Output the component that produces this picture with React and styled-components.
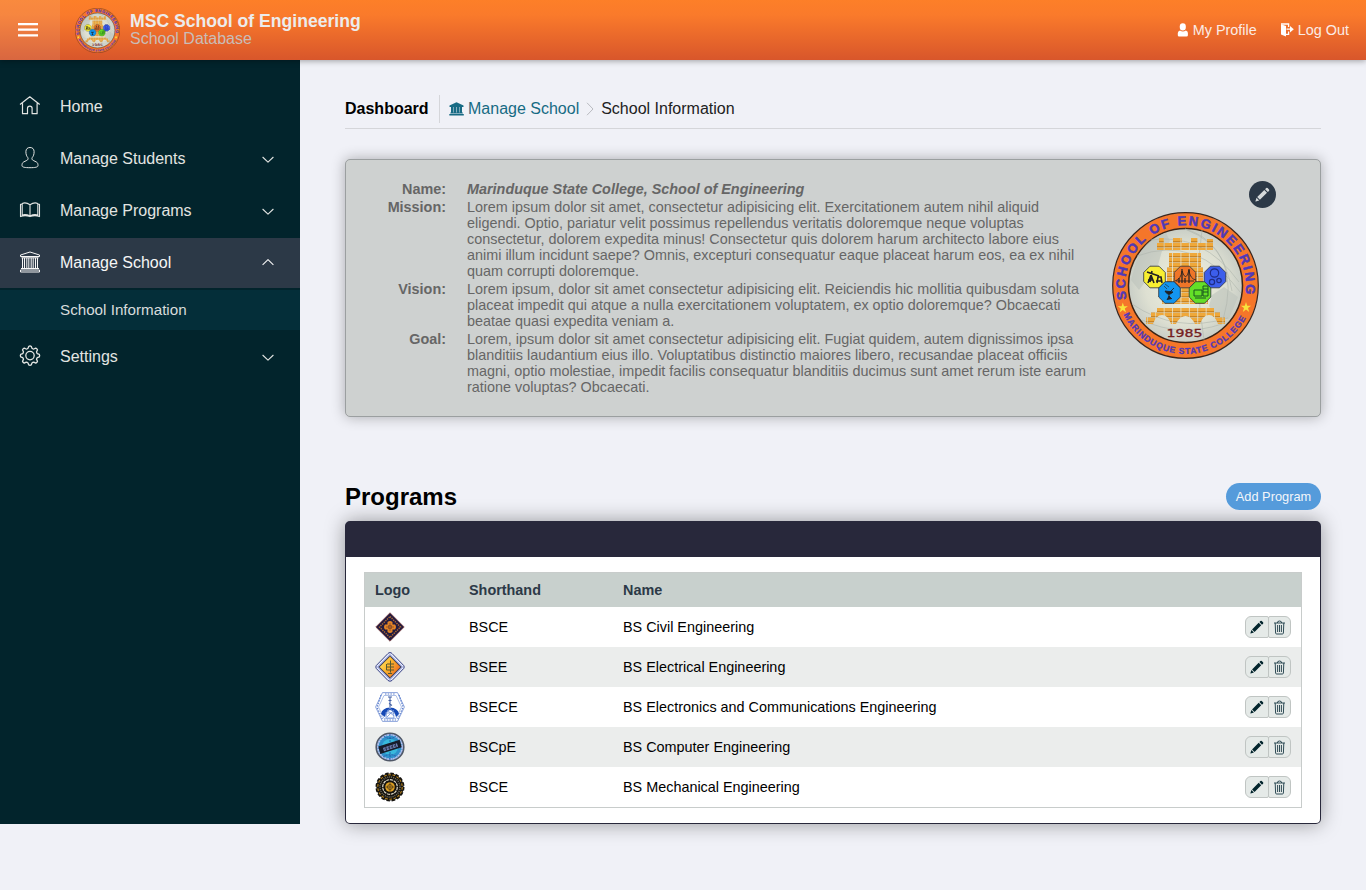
import React from "react";
import styled, { createGlobalStyle } from "styled-components";

const GlobalStyle = createGlobalStyle`
  * { box-sizing: border-box; }
  body { margin: 0; min-height: 890px; background: #f0f1f7; font: 14.4px/16px "Liberation Sans", Arial, sans-serif; color: #000; }
  button { font: inherit; margin: 0; padding: 0; }
  svg { display: block; flex: none; }
`;

const Header = styled.header`
  position: relative;
  z-index: 2;
  display: flex;
  align-items: center;
  height: 60px;
  background: linear-gradient(#fd7f28, #fa7a2b 25%, #d8562b);
  box-shadow: 0 1px 6px rgba(0, 0, 0, 0.35);
`;
const MenuButton = styled.button`
  display: flex;
  align-items: center;
  width: 60px;
  height: 60px;
  padding-left: 18px;
  border: 0;
  background: rgba(225, 225, 225, 0.12);
`;
const Brand = styled.div`
  display: flex;
  align-items: center;
  gap: 10px;
  margin-left: 15px;
  flex: 1;
`;
const BrandText = styled.div`
  padding-bottom: 2px;
`;
const BrandTitle = styled.div`
  font-size: 17.6px;
  line-height: 20px;
  font-weight: bold;
  color: #ececec;
`;
const BrandSub = styled.div`
  font-size: 16px;
  line-height: 16px;
  color: #c9bdb8;
`;
const HeaderLinks = styled.nav`
  display: flex;
  gap: 23px;
  padding-right: 17px;
`;
const HeaderLink = styled.a`
  display: flex;
  align-items: center;
  gap: 4px;
  color: #fbece6;
`;

const Body = styled.div`
  display: flex;
  align-items: flex-start;
`;
const Sidebar = styled.aside`
  display: flex;
  flex-direction: column;
  gap: 2px;
  width: 300px;
  height: 764px;
  padding-top: 22px;
  background: #02242c;
  flex: none;
`;
const NavItem = styled.a`
  display: flex;
  align-items: center;
  height: 50px;
  padding: 0 26px 2px 18px;
  font-size: 16px;
  color: ${(p) => (p.$active ? "#f6f6f6" : "#e2e4e2")};
  background: ${(p) => (p.$active ? "#2c3947" : "transparent")};
`;
const NavIcon = styled.span`
  width: 42px;
`;
const NavLabel = styled.span`
  flex: 1;
  padding-top: 2px;
`;
const SubItem = styled.a`
  display: flex;
  align-items: center;
  height: 40px;
  padding-left: 60px;
  font-size: 15.2px;
  color: #d8dcdc;
  background: #042e39;
`;

const Main = styled.main`
  flex: 1;
  padding: 35px 45px 0;
`;
const Breadcrumb = styled.div`
  display: flex;
  height: 34px;
  border-bottom: 1px solid #d5d6da;
  font-size: 16px;
  line-height: 27px;
  color: #222;
`;
const PageName = styled.div`
  height: 28px;
  width: 95px;
  border-right: 1px solid #d5d6da;
  font-weight: bold;
  color: #000;
`;
const Crumb = styled.a`
  display: flex;
  align-items: center;
  gap: 4px;
  height: 27px;
  margin-left: 9px;
  color: #176b84;
`;
const CrumbArrow = styled.span`
  display: flex;
  align-items: center;
  height: 28px;
  padding: 0 7px;
`;

const InfoCard = styled.section`
  display: flex;
  justify-content: space-between;
  height: 258px;
  margin-top: 30px;
  padding: 21px 44px 0 19px;
  border: 1px solid #9b9fa0;
  border-radius: 5px;
  background: #ced1d0;
  box-shadow: 0 0 14px rgba(0, 0, 0, 0.3);
  color: #666;
`;
const InfoList = styled.dl`
  display: grid;
  grid-template-columns: 81px 1fr;
  column-gap: 21px;
  row-gap: 2px;
  align-content: start;
  margin: 0;
`;
const Term = styled.dt`
  text-align: right;
  font-weight: bold;
`;
const Detail = styled.dd`
  margin: 0;
  white-space: nowrap;
  ${(p) => p.$title && "font-weight: bold; font-style: italic;"}
`;
const SealSide = styled.div`
  display: flex;
  flex-direction: column;
  width: 164px;
  gap: 4px;
`;
const EditButton = styled.button`
  display: grid;
  place-items: center;
  align-self: flex-end;
  width: 27px;
  height: 27px;
  border: 0;
  border-radius: 50%;
  background: #2c3947;
`;

const SectionHead = styled.div`
  display: flex;
  align-items: center;
  justify-content: space-between;
  height: 27px;
  margin-top: 66px;
`;
const SectionTitle = styled.h2`
  margin: 0;
  font-size: 24px;
  line-height: 27px;
`;
const AddButton = styled.button`
  width: 95px;
  height: 27px;
  border: 0;
  border-radius: 14px;
  background: #559bdb;
  color: #f3f6fa;
  font-size: 12.8px;
`;
const Panel = styled.section`
  height: 303px;
  margin-top: 11px;
  border: 1px solid #28283b;
  border-top-width: 36px;
  border-radius: 5px;
  padding: 15px 18px;
  background: #fff;
  box-shadow: 0 0 20px rgba(0, 0, 0, 0.38);
`;
const Table = styled.div`
  border: 1px solid #c8cccb;
`;
const Row = styled.div`
  display: grid;
  grid-template-columns: 94px 154px 1fr 46px;
  align-items: center;
  height: ${(p) => (p.$head ? 34 : 40)}px;
  padding: 0 10px;
  background: ${(p) => (p.$head ? "#c8d0cd" : p.$odd ? "#ebedec" : "#fff")};
  color: ${(p) => (p.$head ? "#2c3947" : "#000")};
  font-weight: ${(p) => (p.$head ? "bold" : "normal")};
`;
const Actions = styled.div`
  display: flex;
`;
const ActionButton = styled.button`
  display: grid;
  place-items: center;
  width: ${(p) => (p.$right ? 23 : 24)}px;
  height: 22px;
  margin-right: ${(p) => (p.$right ? 0 : -1)}px;
  border: 1px solid #c0c5c3;
  border-radius: ${(p) => (p.$right ? "2px 6px 6px 2px" : "6px 2px 2px 6px")};
  background: #e5eae8;
`;

/* ---- icons ---- */
const line = { fill: "none", stroke: "currentColor", strokeLinejoin: "round" };

const MenuIcon = () => (
  <svg width="20" height="14" viewBox="0 0 20 14" fill="#fff">
    <path d="M0 0h20v2.2H0zM0 5.6h20v2.2H0zM0 11.2h20v2.2H0z" />
  </svg>
);
const UserIcon = () => (
  <svg width="12" height="14" viewBox="0 0 12 14" fill="#fff">
    <rect x="2.8" y="0.3" width="6" height="7.2" rx="2.9" />
    <path d="M3 7.4Q.8 8 .8 10v2.2Q.8 13.4 2.1 13.4h7.400q1.400 0 1.400-1.200V10q0-2-2-2.600-3 2-5.900 0z" />
  </svg>
);
const LogoutIcon = () => (
  <svg width="14" height="14" viewBox="0 0 14 14">
    <path d="M1 1.2 6 3v10.4L1 11.6z" fill="#fff" />
    <path d="M1 1h7.6v3M6 11.4h2.6V8.5M6.5 6.2H11" fill="none" stroke="#fff" strokeWidth="1.3" />
    <path d="M10 3 13.8 6.2 10 9.4z" fill="#fff" />
  </svg>
);
const HomeIcon = () => (
  <svg width="24" height="24" viewBox="0 0 24 24" {...line} strokeWidth="1.2">
    <path d="M2 10.500 11.800 2.800 21.700 10.500M4.500 9.300v10.400h5v-5.500q0-2.100 2.300-2.100t2.300 2.100v5.500h5V9.300" />
  </svg>
);
const StudentIcon = () => (
  <svg width="24" height="24" viewBox="0 0 24 24" {...line} strokeWidth="1">
    <path d="M12 1.500c-2.500 0-4.100 1.500-4.100 4.100 0 3 .7 4.500 1.900 6 .6 1.200.2 2.200-1 2.800l-3.200 1.600C4.200 16.800 4 18 4 19.700c0 1.500 3 2 8 2s8-.5 8-2c0-1.700-.2-2.900-1.600-3.700l-3.200-1.600c-1.200-.6-1.600-1.600-1-2.800 1.200-1.500 1.900-3 1.900-6 0-2.600-1.600-4.100-4.100-4.100z" />
  </svg>
);
const BookIcon = () => (
  <svg width="24" height="24" viewBox="0 0 24 24" {...line} strokeWidth="1.1">
    <path d="M12 6.700Q8 4 4.200 5.400V17Q8 15.900 12 18q4-2.100 7.800-1V5.400Q16 4 12 6.700zV18M4.200 6.300H2.500v12.300Q7 16.700 12 18.600q5-1.900 9.500 0V6.300h-1.700" />
  </svg>
);
const SchoolIcon = () => (
  <svg width="24" height="24" viewBox="0 0 24 24" {...line} strokeWidth="1">
    <path d="M2.500 6.500V5L12 2l9.500 3v1.500zM3.500 7.800h17M4.500 8v10M6.500 8v10M8.800 8v10M10.800 8v10M13.200 8v10M15.200 8v10M17.500 8v10M19.500 8v10M3 18.500h18M2.500 20h19v2h-19z" />
  </svg>
);
const gearPath = Array.from({ length: 48 }, (_, i) => {
  const a = (i / 48) * Math.PI * 2;
  const r = 8.5 + 1.2 * Math.tanh(2 * Math.cos(8 * a));
  return `${i ? "L" : "M"}${(12 + r * Math.sin(a)).toFixed(2)} ${(11.6 - r * Math.cos(a)).toFixed(2)}`;
}).join("") + "Z";
const GearIcon = () => (
  <svg width="24" height="24" viewBox="0 0 24 24" {...line} strokeWidth="1.3">
    <path d={gearPath} />
    <circle cx="12" cy="11.6" r="4.2" />
  </svg>
);
const Chevron = ({ up }) => (
  <svg width="12" height="10" viewBox="0 0 12 10" {...line} strokeWidth="1.1">
    <path d={up ? "M.6 7.900 6 2.600l5.400 5.300" : "M.6 4 6 9.200 11.400 4"} />
  </svg>
);
const BankIcon = () => (
  <svg width="15" height="14" viewBox="0 0 15 14" fill="currentColor">
    <path d="M.5 3.500 7.500.2l7 3.300v1.400H.5zM2 5h2.200v5.800H2zM4.900 5h2.200v5.800H4.900zM7.900 5h2.200v5.800H7.900zM10.800 5H13v5.800h-2.200zM1.300 10.400h12.500v1.200H1.300zM.3 11.900h14.500v1.600H.3z" />
    <path d="M2 5h11v6H2z" opacity=".35" />
  </svg>
);
const ArrowIcon = () => (
  <svg width="8" height="14" viewBox="0 0 8 14" fill="none" stroke="#b9bbc0">
    <path d="M1 .8 7 7l-6 6.200" />
  </svg>
);
const PencilIcon = ({ color, size = 15 }) => (
  <svg width={size} height={size} viewBox="0 0 15 15" fill={color}>
    <path d="M9.300 3 12 5.700 4.900 12.800 2.200 10.100zM10.100 2.200l1.100-1.100q.7-.6 1.400 0L14 2.500q.6.700 0 1.400l-1.200 1.100zM1.500 10.800l2.700 2.700-3.500.9q-.4 0-.2-.5z" />
  </svg>
);
const TrashIcon = () => (
  <svg width="13" height="15" viewBox="0 0 13 15" fill="none" stroke="#2f4c56" strokeWidth="1">
    <path d="M1 3h11M4.300 3Q4.300 1 6.500 1t2.200 2M2.200 3l.4 10q.1 1 1 1h5.800q.9 0 1-1l.4-10M4.600 5v7M6.500 5v7M8.400 5v7" />
  </svg>
);

/* ---- school seal ---- */
const octagon = (cx, cy, r) =>
  Array.from({ length: 8 }, (_, i) => {
    const a = ((i + 0.5) * Math.PI) / 4;
    return `${(cx + r * Math.cos(a)).toFixed(1)},${(cy + r * Math.sin(a)).toFixed(1)}`;
  }).join(" ");
const star = (cx, cy) =>
  Array.from({ length: 10 }, (_, i) => {
    const r = i % 2 ? 2.1 : 5.4;
    const a = (i * Math.PI) / 5;
    return `${(cx + r * Math.sin(a)).toFixed(1)},${(cy - r * Math.cos(a)).toFixed(1)}`;
  }).join(" ");

const Seal = ({ size, id }) => (
  <svg width={size} height={size} viewBox="0 0 147 147">
    <defs>
      <path id={`${id}-top`} d="M14.600 87A60.400 60.400 0 1 1 132.400 87" />
      <path id={`${id}-bottom`} d="M11.500 102.500A68.400 68.400 0 0 0 135.500 102.500" />
      <pattern id={`${id}-brick`} width="8.4" height="5" patternUnits="userSpaceOnUse" x="2.2" y="1">
        <rect width="7.6" height="4.3" fill="#efa83a" />
        <path d="M0 3.800h7.600" stroke="#b97518" strokeWidth="1" />
      </pattern>
      <radialGradient id={`${id}-globe`}>
        <stop offset="0" stopColor="#eef0e0" />
        <stop offset=".7" stopColor="#dee0d2" />
        <stop offset="1" stopColor="#c9cec6" />
      </radialGradient>
    </defs>
    <circle cx="73.5" cy="73.5" r="72.8" fill="#f5762a" stroke="#39251e" strokeWidth="1.2" />
    <circle cx="73.5" cy="73.5" r="57" fill={`url(#${id}-globe)`} stroke="#3b2417" strokeWidth="1.5" />
    <path d="M24 50q8-23 30-29l4 8-8 10-4 14-13 17-6 8-8-10zM100 83l12-8 14 10-9 22-13-3-7-10z" fill="#bfc5bd" opacity=".65" />
    <path d="M73 17q38 10 47 62M73 17q58 22 38 91M39 28q52-8 88 42M25 44q60-22 104 37M20 92q44 30 96 14M30 108q38 18 80 4M90 18q-8 50 2 110" fill="none" stroke="#aeb6ad" strokeWidth=".6" />
    <path fill={`url(#${id}-brick)`} d="M45 31h2v-5h5v5h9v-5h9v5h9v-5h7v5h9v-4h6v11H45zM57 41h32v14h2v24h5v13H50V79h5V55h2z" />
    <path fill={`url(#${id}-brick)`} d="M45 96h57v4h6v5h5v7h-7q-3-9-9-9t-9 9h-5q-4-8-9.500-8t-9.500 8h-5q-3-9-9-9t-9 9h-7v-7h5v-5h6z" />
    {[["#f8ef31", 42.5, 65], ["#ef7528", 73, 65], ["#3c5eeb", 103, 65], ["#1395ee", 57.5, 80.5], ["#64df27", 88, 80.5]].map(([c, x, y]) => (
      <polygon key={c} points={octagon(x, y, 11.7)} fill={c} stroke="#2c3038" strokeWidth=".8" />
    ))}
    <g fill="none" stroke="#202024" strokeWidth="1.2">
      <path d="M35 60l12 4M40 59l-2 11M36 71l3-8 3 8M45 71l1-6 3 0 1 6M36 68h5M44 69h5" strokeWidth="1.6" />
      <path d="M63 69q6-2 7-10 4 12 7-1 1 9 7 10M64 69h18" strokeWidth=".8" />
      <path d="M70 57v14M77 57v14M67 66v5M73 66v5" />
      <g stroke="#1e2c86"><circle cx="102.5" cy="61" r="4.2" /><circle cx="100" cy="70" r="2.6" /><circle cx="107" cy="68.5" r="2.200" /></g>
      <path d="M53 79q3 6 8 1zM57 82v5M55 88l2-4 3 3M58 80l4-4" fill="#202024" strokeWidth=".9" />
      <path d="M52 74l3 3M53 72l4 3" strokeWidth=".6" />
      <path d="M82 78h8v6h-8zM83 86h11M91 74h5v10h-5zM91 77h5M91 80h5" stroke="#195321" strokeWidth="1" />
    </g>
    <polygon points={star(10.8, 96)} fill="#f7e43c" />
    <polygon points={star(134, 95.5)} fill="#f7e43c" />
    <g fontFamily="Liberation Sans, sans-serif" fontWeight="bold" fill="#5039b8" stroke="#5039b8">
      <text fontSize="13" letterSpacing="1.9" strokeWidth=".5">
        <textPath href={`#${id}-top`} textLength="213">SCHOOL OF ENGINEERING</textPath>
      </text>
      <text fontSize="8.6" letterSpacing=".8" strokeWidth=".3">
        <textPath href={`#${id}-bottom`} textLength="152">MARINDUQUE STATE COLLEGE</textPath>
      </text>
    </g>
    <text x="54.5" y="125" fontSize="10.5" textLength="36" lengthAdjust="spacingAndGlyphs" fontFamily="DejaVu Sans, sans-serif" fill="#74201f" stroke="#74201f" strokeWidth=".3">1985</text>
  </svg>
);

/* ---- program logos ---- */
const CivilLogo = () => (
  <svg width="30" height="30" viewBox="0 0 30 30">
    <path d="M15 .8 29.200 15 15 29.200.8 15z" fill="#211b40" stroke="#8a4d4a" strokeWidth=".8" />
    <path d="M15 4.500 25.500 15 15 25.500 4.500 15z" fill="none" stroke="#b36a32" strokeWidth="1.500" strokeDasharray="1.300 1" />
    <path d="M15 8 22 15l-7 7-7-7z" fill="#241c3c" />
    <path d="M12.500 12.500V10q2.500-2 5 0v2.500H20q2 2.500 0 5h-2.500V20q-2.500 2-5 0v-2.500H10q-2-2.500 0-5z" fill="#e38426" />
    <path d="M15 11v8M11 15h8M13.500 13.500h3v3h-3z" fill="none" stroke="#7a4427" strokeWidth=".7" />
  </svg>
);
const ElectricalLogo = () => (
  <svg width="30" height="30" viewBox="0 0 30 30">
    <defs>
      <linearGradient id="ee" x2="1" y2=".6"><stop stopColor="#fff078" /><stop offset=".5" stopColor="#fdb72e" /><stop offset="1" stopColor="#ed6d24" /></linearGradient>
    </defs>
    <path d="M15 .6Q16.200.6 17 1.500L28.700 13.500q1 1.500 0 3L17 28.500q-2 1.500-4 0L1.300 16.500q-1-1.500 0-3L13 1.500Q13.800.6 15 .6z" fill="#e9eefb" stroke="#343d83" />
    <path d="M15 2.800 27.200 15 15 27.200 2.800 15z" fill="none" stroke="#8791cf" strokeWidth="1.100" />
    <path d="M15 4.200 25.800 15 15 25.800 4.200 15z" fill="url(#ee)" stroke="#302d36" />
    <path d="M15.500 8.500v12M12 12h7M11.500 12v6h4M12 15h7M15.500 18H19M13 21.500h4" fill="none" stroke="#58592e" />
  </svg>
);
const ElectronicsLogo = () => (
  <svg width="30" height="30" viewBox="0 0 30 30" fill="none">
    <path d="M7.500.6h15L29.400 15l-6.900 14.400h-15L.6 15z" fill="#fff" stroke="#6e8dd2" strokeWidth=".8" />
    <path d="M9 3.500h12L26.500 15 21 26.500H9L3.500 15z" stroke="#8da6dc" strokeWidth=".7" />
    <path d="M6 3 2.300 14.500M24 3l4 11.500M2.300 16l5 11M27.700 16l-5 11M10 2h10M9 28h12" stroke="#5d7fcd" strokeWidth="1.200" strokeDasharray="1.500 1.200" />
    <path d="M6 22q1-6 9-6.500 8 .5 9 6.500l-3 3q-1-6-6-7-4 1-5 7z" fill="#1649b5" />
    <path d="M15 16q-5 4-4 10M15 16q5 4 4 10M10 21h10M12 18l7 6M19 18l-7 7M11 26h8" stroke="#6f91d6" strokeWidth=".8" />
    <path d="M15 5v10M13 5h4M13.500 8.500h3M14 11.500l3 2" stroke="#4360a4" strokeWidth="1.100" />
  </svg>
);
const ComputerLogo = () => (
  <svg width="30" height="30" viewBox="0 0 30 30">
    <circle cx="15" cy="15" r="13.800" fill="#83a9d8" stroke="#505867" strokeWidth="1.600" />
    <circle cx="15" cy="15" r="12" fill="#2e91cb" stroke="#b5bfee" strokeWidth="1.500" strokeDasharray="2 .8" />
    <circle cx="15" cy="15" r="8" fill="#38b9dc" />
    <path d="M9 4q6 5 12 0M8 25q7-5 14 0M15 2v26M4 15h22" fill="none" stroke="#2357a6" strokeWidth=".9" strokeDasharray="2 1" />
    <path d="M3.300 14.500 24.700 7.800l2 7.400L5.300 22.100z" fill="#171c2b" />
    <path d="M8.500 17.600 22.500 13" stroke="#6d7fb4" strokeWidth="3.600" strokeDasharray="2.600 .7" />
    <path d="M9.500 17.200 21.500 13.300" stroke="#1b2236" strokeWidth="1" strokeDasharray="1.300 2" />
  </svg>
);
const MechanicalLogo = () => (
  <svg width="30" height="30" viewBox="0 0 30 30" fill="none">
    <circle cx="15" cy="15" r="13.600" fill="#15130f" />
    <circle cx="15" cy="15" r="13.600" stroke="#15130f" strokeWidth="1.800" strokeDasharray="3.500 1.840" />
    <circle cx="15" cy="15" r="12.200" stroke="#c08a1e" strokeWidth="1.100" strokeDasharray="2.600 1.660" />
    <circle cx="15" cy="15" r="10" stroke="#77725f" strokeWidth="1.500" strokeDasharray="1 1" />
    <circle cx="15" cy="15" r="7.300" stroke="#dcd8c6" strokeWidth="1.200" strokeDasharray="3 .8" />
    <circle cx="15" cy="15" r="4.800" fill="#dc9f22" />
    <circle cx="15" cy="15" r="2.500" stroke="#3c2c16" strokeWidth=".7" />
    <path d="M15 10.500v9M10.500 15h9" stroke="#433018" strokeWidth=".7" />
  </svg>
);

const INFO = [
  ["Mission:", ["Lorem ipsum dolor sit amet, consectetur adipisicing elit. Exercitationem autem nihil aliquid", "eligendi. Optio, pariatur velit possimus repellendus veritatis doloremque neque voluptas", "consectetur, dolorem expedita minus! Consectetur quis dolorem harum architecto labore eius", "animi illum incidunt saepe? Omnis, excepturi consequatur eaque placeat harum eos, ea ex nihil", "quam corrupti doloremque."]],
  ["Vision:", ["Lorem ipsum, dolor sit amet consectetur adipisicing elit. Reiciendis hic mollitia quibusdam soluta", "placeat impedit qui atque a nulla exercitationem voluptatem, ex optio doloremque? Obcaecati", "beatae quasi expedita veniam a."]],
  ["Goal:", ["Lorem, ipsum dolor sit amet consectetur adipisicing elit. Fugiat quidem, autem dignissimos ipsa", "blanditiis laudantium eius illo. Voluptatibus distinctio maiores libero, recusandae placeat officiis", "magni, optio molestiae, impedit facilis consequatur blanditiis ducimus sunt amet rerum iste earum", "ratione voluptas? Obcaecati."]],
];
const PROGRAMS = [
  [CivilLogo, "BSCE", "BS Civil Engineering"],
  [ElectricalLogo, "BSEE", "BS Electrical Engineering"],
  [ElectronicsLogo, "BSECE", "BS Electronics and Communications Engineering"],
  [ComputerLogo, "BSCpE", "BS Computer Engineering"],
  [MechanicalLogo, "BSCE", "BS Mechanical Engineering"],
];
const NAV = [
  [HomeIcon, "Home"],
  [StudentIcon, "Manage Students", "down"],
  [BookIcon, "Manage Programs", "down"],
  [SchoolIcon, "Manage School", "up"],
  [GearIcon, "Settings", "down"],
];

export default function App() {
  return (
    <>
      <GlobalStyle />
      <Header>
        <MenuButton aria-label="Menu"><MenuIcon /></MenuButton>
        <Brand>
          <Seal size={45} id="brand" />
          <BrandText>
            <BrandTitle>MSC School of Engineering</BrandTitle>
            <BrandSub>School Database</BrandSub>
          </BrandText>
        </Brand>
        <HeaderLinks>
          <HeaderLink><UserIcon />My Profile</HeaderLink>
          <HeaderLink><LogoutIcon />Log Out</HeaderLink>
        </HeaderLinks>
      </Header>
      <Body>
        <Sidebar>
          {NAV.map(([Icon, label, arrow]) => (
            <React.Fragment key={label}>
              <NavItem $active={arrow === "up"}>
                <NavIcon><Icon /></NavIcon>
                <NavLabel>{label}</NavLabel>
                {arrow && <Chevron up={arrow === "up"} />}
              </NavItem>
              {arrow === "up" && <SubItem>School Information</SubItem>}
            </React.Fragment>
          ))}
        </Sidebar>
        <Main>
          <Breadcrumb>
            <PageName>Dashboard</PageName>
            <Crumb><BankIcon />Manage School</Crumb>
            <CrumbArrow><ArrowIcon /></CrumbArrow>
            School Information
          </Breadcrumb>
          <InfoCard>
            <InfoList>
              <Term>Name:</Term>
              <Detail $title>Marinduque State College, School of Engineering</Detail>
              {INFO.map(([term, lines]) => (
                <React.Fragment key={term}>
                  <Term>{term}</Term>
                  <Detail>{lines.map((l) => <div key={l}>{l}</div>)}</Detail>
                </React.Fragment>
              ))}
            </InfoList>
            <SealSide>
              <EditButton aria-label="Edit"><PencilIcon color="#d5d9da" /></EditButton>
              <Seal size={147} id="school" />
            </SealSide>
          </InfoCard>
          <SectionHead>
            <SectionTitle>Programs</SectionTitle>
            <AddButton>Add Program</AddButton>
          </SectionHead>
          <Panel>
            <Table>
              <Row $head><span>Logo</span><span>Shorthand</span><span>Name</span></Row>
              {PROGRAMS.map(([Logo, code, name], i) => (
                <Row key={name} $odd={i % 2 === 1}>
                  <Logo />
                  <span>{code}</span>
                  <span>{name}</span>
                  <Actions>
                    <ActionButton aria-label="Edit"><PencilIcon color="#02242c" size={14} /></ActionButton>
                    <ActionButton $right aria-label="Delete"><TrashIcon /></ActionButton>
                  </Actions>
                </Row>
              ))}
            </Table>
          </Panel>
        </Main>
      </Body>
    </>
  );
}
